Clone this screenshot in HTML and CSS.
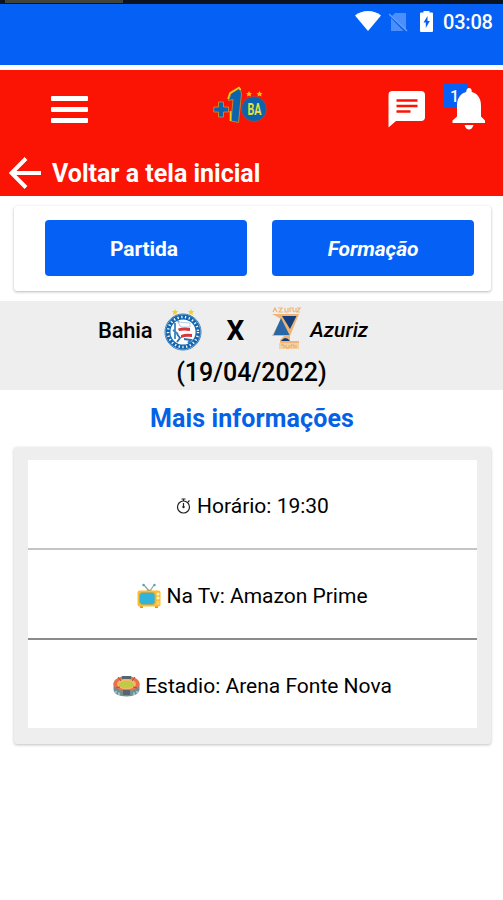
FILE: index.html
```html
<!DOCTYPE html>
<html lang="pt-BR">
<head>
    <meta charset="UTF-8">
    <meta name="viewport" content="width=device-width, initial-scale=1.0">
    <title>Partida</title>
    <link rel="stylesheet" href="styles.css">
</head>
<body>
    <div class="top-edge"><div class="top-edge-tab"></div></div>
    <div class="status-bar">
        <svg class="wifi" width="26" height="20" viewBox="0 0 26 20">
            <path d="M13 20L0 4.500C3.500 1.500 8 0 13 0s9.500 1.500 13 4.500z" fill="#fff"/>
        </svg>
        <svg class="no-sim" width="19" height="20" viewBox="0 0 19 20">
            <path d="M6 1h11v17L3 4z M2 6l12.500 13H2z" fill="#4d8ffa"/>
            <path d="M0 2l18 17" stroke="#6ba1fb" stroke-width="1.300"/>
        </svg>
        <svg class="battery" width="13" height="21" viewBox="0 0 13 21">
            <path d="M3.500 0h6v1.500H12q1 0 1 1V20q0 1-1 1H1q-1 0-1-1V2.500q0-1 1-1h2.500z" fill="#fff"/>
            <path d="M7.500 5L3.500 11.500h2.300V17l4-7H7.500z" fill="#0561f5"/>
        </svg>
        <span class="clock">03:08</span>
    </div>
    <header class="header">
        <div class="toolbar">
            <div class="menu"><span></span><span></span><span></span></div>
            <svg class="logo" width="56" height="40" viewBox="0 0 56 40">
                <g fill="#0c64ad" stroke="#c79a2c" stroke-width=".8">
                    <path d="M5.500 16h5v5h5v5h-5v5h-5v-5H.800v-5h4.700z"/>
                    <path d="M27 2l-9 5.500-2.500 7 4.500-1L18 35l7.500 1.500L28.500 8z"/>
                </g>
                <path d="M27.500 4l-1.500-2.500L17 7l-2 6M17.500 25v10" fill="none" stroke="#f4cf21" stroke-width="1.600"/>
                <circle cx="41" cy="23" r="12.500" fill="#0c64ad" stroke="#b8533e" stroke-width=".5"/>
                <path d="M36 5l1 1.900 2 .3-1.500 1.400.5 2-2-1-2 1 .5-2L33 7.200l2-.3zM46.500 5l1 1.900 2 .3-1.500 1.400.5 2-2-1-2 1 .5-2-1.500-1.400 2-.3z" fill="#ffc400"/>
                <text x="41.500" y="29" text-anchor="middle" textLength="14" lengthAdjust="spacingAndGlyphs" class="logo-text">BA</text>
            </svg>
            <svg class="chat" width="38" height="37" viewBox="0 0 38 37">
                <path d="M4.500 0h28.500Q37 0 37 4v22q0 4-4 4H8L.5 36.500V4q0-4 4-4z" fill="#fff"/>
                <path d="M8.500 9.500h21M8.500 15h21M8.500 20.500h14" stroke="#fb1303" stroke-width="2.300"/>
            </svg>
            <div class="notifications">
                <span class="badge">1</span>
                <svg class="bell" width="34" height="42" viewBox="0 0 34 42">
                    <path d="M17 0q2.800 0 2.800 4C26 5.500 29 11 29 17.500v11l4 4V35H.5v-2.500l4.500-4v-11C5 11 8 5.500 14.200 4 14.200 0 17 0 17 0zM12.500 37h9q-1.500 4.500-4.500 4.500T12.500 37z" fill="#fff"/>
                </svg>
            </div>
        </div>
        <div class="back">
            <svg width="34" height="34" viewBox="0 0 34 34">
                <path d="M32 17H3M17 2.500L2.500 17 17 31.500" fill="none" stroke="#fff" stroke-width="4"/>
            </svg>
            <span>Voltar a tela inicial</span>
        </div>
    </header>

    <div class="tabs">
        <div class="tab"><span class="tab-match">Partida</span></div>
        <div class="tab"><span class="tab-lineup">Formação</span></div>
    </div>

    <div class="match">
        <div class="teams">
            <span class="home">Bahia</span>
            <svg class="bahia" width="38" height="42" viewBox="0 0 38 42">
                <circle cx="19" cy="23" r="18" fill="#f3f8fc" stroke="#397db8" stroke-width="1"/>
                <circle cx="19" cy="23" r="15" fill="none" stroke="#1265ae" stroke-width="4.800"/>
                <circle cx="19" cy="23" r="15" fill="none" stroke="#f3f8fc" stroke-width="2.500" stroke-dasharray="1.300 2.500"/>
                <circle cx="19" cy="23" r="12" fill="#fff"/>
                <path d="M11 14v16M14 12l3 5M9 21l5 4" stroke="#3c83c0" stroke-width="1.800"/>
                <path d="M14 13l12 1v4H17z" fill="#fff" stroke="#b8cfe2"/>
                <path d="M14 19.500q6-1.500 12-.5v3q-6-1-11 0zM17 26q5-2 11-1v3q-6-1-11 1z" fill="#d6363e"/>
                <path d="M13 25l3 4-3 4M20 30l7 1-3 3" fill="none" stroke="#286fae" stroke-width="1.800"/>
                <path d="M11 0l1 2 2.200.3-1.600 1.500.4 2.200-2-1-2 1 .4-2.200L7.800 2.300 10 2zM27 0l1 2 2.200.3-1.600 1.500.4 2.200-2-1-2 1 .4-2.200-1.600-1.500L26 2z" fill="#f5cc32"/>
            </svg>
            <span class="versus">X</span>
            <svg class="azuriz" width="30" height="43" viewBox="0 0 30 43">
                <path d="M1 7h27L19 29v5h9v2H9v-3l4-4H1L10 12z" fill="#efb575"/>
                <path d="M11 9h14.500l-6.500 13z" fill="#163f7c"/>
                <path d="M10 11l8.500 17H2.500z" fill="#2868a6"/>
                <path d="M10 34q4.500-6 9 0z" fill="#0e3b80"/>
                <path d="M2 5l2-4 2 4M7 1h4L8 5h4M14 1v4h3V1M19 5V1h3v3l2 1M25 1v4M26 1h3l-3 4h3" fill="none" stroke="#efb575" stroke-width="1.200"/>
                <path d="M8 36h20v6H8z" fill="#f4d0a5"/>
                <path d="M10 38h3v3M15 38v3h3v-3M20 41v-3h3v3M25 38v3" fill="none" stroke="#e9a860"/>
            </svg>
            <span class="away">Azuriz</span>
        </div>
        <div class="date">(19/04/2022)</div>
    </div>

    <h2 class="title">Mais informações</h2>

    <div class="info">
        <div class="info-row">
            <svg width="16" height="18" viewBox="0 0 16 18">
                <g fill="none" stroke="#222" stroke-width="1.200">
                    <circle cx="7.500" cy="10" r="6"/>
                    <path d="M7.500 10V6M7.500 4V2M5.500 2h4M12 5l1.500-1.500"/>
                </g>
                <circle cx="7.500" cy="10" r="1.200" fill="#222"/>
            </svg>
            <span class="time">Horário: 19:30</span>
        </div>
        <div class="info-row">
            <svg width="24" height="26" viewBox="0 0 24 26">
                <path d="M12 8L7 2M13 8l4-6" stroke="#8ba4ab" stroke-width="1.200"/>
                <circle cx="6.500" cy="2" r="1.200" fill="#5a9fb1"/>
                <circle cx="17.500" cy="2" r="1.200" fill="#5a9fb1"/>
                <path d="M9 8q3-3 6 0z" fill="#8d9a98"/>
                <path d="M3 22h3v3H3zM18 22h3v3h-3z" fill="#dd951c"/>
                <rect x="0.500" y="7.500" width="23" height="16" rx="2" fill="#fdbd2c"/>
                <rect x="2.500" y="9.500" width="15.500" height="12" rx="3" fill="#2fb5dc" stroke="#b9aa5b"/>
                <circle cx="21" cy="11" r="1.500" fill="#fff2cf"/>
                <circle cx="21" cy="15" r="1.500" fill="#fff2cf"/>
                <path d="M19.500 19h3M19.500 21h3" stroke="#ffe39b"/>
            </svg>
            <span class="tv">Na Tv: Amazon Prime</span>
        </div>
        <div class="info-row">
            <svg width="27" height="22" viewBox="0 0 27 22">
                <path d="M.5 8v7q1 6 13 6.500Q25 21 26.500 15V8z" fill="#709098"/>
                <ellipse cx="13.500" cy="8.500" rx="13" ry="7.500" fill="#ed7047"/>
                <ellipse cx="13.500" cy="9" rx="9.500" ry="5.200" fill="#f6b66a"/>
                <ellipse cx="13.500" cy="9.500" rx="7.500" ry="3.600" fill="#c0cb45"/>
                <path d="M9 1h9v3H9zM10 15h7v5h-7z" fill="#57656c"/>
                <path d="M5 2l3 4M22 2l-3 4M3 13l4-1M24 13l-4-1" stroke="#8c5b50"/>
                <path d="M3 16v2M6 17.500v2.500M21 17.500v2.500M24 16v2" stroke="#b4cbd0" stroke-width="1.500"/>
            </svg>
            <span class="stadium">Estadio: Arena Fonte Nova</span>
        </div>
    </div>
</body>
</html>
```

FILE: styles.css
```css
* {
    box-sizing: border-box;
}

body {
    margin: 0;
    min-height: 900px;
    background-color: #fff;
    font-family: Roboto, "Liberation Sans", sans-serif;
    color: #000;
    overflow: hidden;
}

svg {
    display: block;
    flex-shrink: 0;
}

span {
    white-space: nowrap;
}

.top-edge {
    height: 4px;
    background-color: #0b1421;
}

.top-edge-tab {
    width: 118px;
    height: 3px;
    margin-left: 5px;
    background-color: #41443b;
}

.status-bar {
    display: flex;
    align-items: flex-start;
    height: 61px;
    padding-left: 355px;
    background-color: #0561f5;
}

.wifi {
    margin-top: 7px;
}

.no-sim {
    margin: 8px 0 0 8px;
}

.battery {
    margin: 7px 0 0 12px;
}

.clock {
    margin: 6px 0 0 10px;
    font-size: 20px;
    line-height: 24px;
    font-weight: 500;
    letter-spacing: -0.2px;
    color: #fff;
}

.header {
    height: 131px;
    border-top: 5px solid #fff;
    background-color: #fb1303;
    color: #fff;
}

.toolbar {
    display: flex;
    align-items: flex-start;
    height: 80px;
    padding-left: 51px;
}

.menu {
    display: flex;
    flex-direction: column;
    gap: 6px;
    width: 37px;
    margin-top: 25.500px;
}

.menu span {
    height: 5px;
    border-radius: 1px;
    background-color: #fff;
}

.logo {
    margin: 16px 0 0 125px;
}

.logo-text {
    font-family: Roboto, sans-serif;
    font-size: 17px;
    font-weight: 700;
    fill: #e4df45;
}

.chat {
    margin: 21px 0 0 119px;
}

.notifications {
    position: relative;
    width: 43px;
    height: 48px;
    margin: 14px 0 0 18px;
}

.badge {
    display: block;
    width: 23px;
    height: 24px;
    padding-right: 2px;
    background-color: #0561f5;
    font-size: 16px;
    line-height: 25px;
    font-weight: 500;
    text-align: center;
}

.bell {
    position: absolute;
    left: 8px;
    top: 4px;
}

.back {
    display: flex;
    align-items: center;
    gap: 9px;
    height: 46px;
    padding-left: 9px;
    font-size: 25px;
    font-weight: 700;
    letter-spacing: 0;
}

.tabs {
    display: flex;
    gap: 25px;
    height: 85px;
    margin: 10px 12px 0 14px;
    padding: 14px 17px 15px 31px;
    border-radius: 3px;
    box-shadow: 0 1px 3px rgba(0, 0, 0, 0.28);
}

.tab {
    display: flex;
    flex: 1;
    align-items: center;
    justify-content: center;
    padding-top: 2px;
    border-radius: 4px;
    background-color: #0561f5;
    color: #fff;
    font-size: 21px;
    font-weight: 700;
    letter-spacing: -0.1px;
}

.tab-match {
    margin-right: 4px;
}

.tab-lineup {
    font-style: italic;
}

.match {
    height: 89px;
    margin-top: 10px;
    background-color: #eee;
}

.teams {
    display: flex;
    align-items: center;
    height: 58px;
    padding-left: 98px;
    font-size: 22px;
    font-weight: 500;
}

.home {
    letter-spacing: -0.2px;
}

.bahia {
    margin-left: 12px;
}

.versus {
    margin-left: 24px;
    font-size: 28px;
    font-weight: 700;
}

.azuriz {
    margin-left: 27px;
    margin-top: -3px;
}

.away {
    margin-left: 9px;
    font-size: 21px;
    font-style: italic;
}

.date {
    font-size: 25px;
    line-height: 28px;
    font-weight: 500;
    text-align: center;
}

.title {
    height: 57px;
    margin: 0;
    padding-left: 1px;
    color: #0561e6;
    font-size: 25px;
    line-height: 58px;
    font-weight: 700;
    letter-spacing: 0.1px;
    text-align: center;
}

.info {
    height: 297px;
    margin: 0 12px 0 14px;
    padding: 13px 14px 16px;
    border-radius: 3px;
    background-color: #eee;
    box-shadow: 0 1px 3px rgba(0, 0, 0, 0.25);
}

.info-row {
    display: flex;
    align-items: center;
    justify-content: center;
    gap: 5px;
    height: 90px;
    padding-top: 3px;
    background-color: #fff;
    border-bottom: 2px solid #c4c4c4;
    font-size: 21px;
}

.info-row:nth-child(2) {
    border-bottom-color: #8b8b8b;
}

.info-row:last-child {
    height: 88px;
    border-bottom: none;
}
```
